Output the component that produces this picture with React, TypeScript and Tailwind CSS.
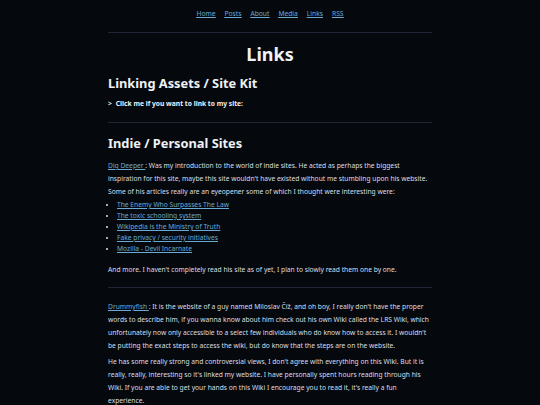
import React from "react";

const links = [
  "The Enemy Who Surpasses The Law",
  "The toxic schooling system",
  "Wikipedia is the Ministry of Truth",
  "Fake privacy / security initiatives",
  "Mozilla - Devil Incarnate",
];

export default function App() {
  return (
    <div
      className="min-h-[405px] bg-[#05090e] text-[#dadfe5] text-[6.7px] leading-[13px]"
      style={{ fontFamily: '"Noto Sans", sans-serif' }}
    >
      <div className="mx-auto w-[324px] pt-[7px]">
        <nav className="flex justify-center gap-[9px] text-[#6aaad4] underline">
          <a>Home</a>
          <a>Posts</a>
          <a>About</a>
          <a>Media</a>
          <a>Links</a>
          <a>RSS</a>
        </nav>
        <div className="mt-[12px] h-px bg-[#1e2633]" />
        <h1 className="mt-[8px] text-center text-[18px] leading-[26px] font-bold text-[#eef2f6]">Links</h1>
        <h2 className="mt-[7px] text-[12.8px] leading-[18px] font-bold text-[#eef2f6]">Linking Assets / Site Kit</h2>
        <div className="mt-[5px] flex gap-[4px] font-bold text-[6.7px] text-[#eef2f6]">
          <span>&gt;</span>
          <span>Click me if you want to link to my site:</span>
        </div>
        <div className="mt-[12px] h-px bg-[#1e2633]" />
        <h2 className="mt-[11px] text-[12.8px] leading-[18px] font-bold text-[#eef2f6]">Indie / Personal Sites</h2>
        <p className="mt-[7px]">
          <a className="text-[#6aaad4] underline">Dig Deeper </a>: Was my introduction to the world of indie sites. He acted as perhaps the biggest
          <br />
          inspiration for this site, maybe this site wouldn't have existed without me stumbling upon his website.
          <br />
          Some of his articles really are an eyeopener some of which I thought were interesting were:
        </p>
        <ul className="mt-[1px] pl-[9px] list-disc leading-[11px]">
          {links.map((l) => (
            <li key={l}>
              <a className="text-[#6aaad4] underline">{l}</a>
            </li>
          ))}
        </ul>
        <p className="mt-[9px]">
          And more. I haven't completely read his site as of yet, I plan to slowly read them one by one.
        </p>
        <div className="mt-[11px] h-px bg-[#1e2633]" />
        <p className="mt-[12px]">
          <a className="text-[#6aaad4] underline">Drummyfish </a>: It is the website of a guy named Miloslav Číž, and oh boy, I really don't have the proper
          <br />
          words to describe him, if you wanna know about him check out his own Wiki called the LRS Wiki, which
          <br />
          unfortunately now only accessible to a select few individuals who do know how to access it. I wouldn't
          <br />
          be putting the exact steps to access the wiki, but do know that the steps are on the website.
        </p>
        <p className="mt-[3px]">
          He has some really strong and controversial views, I don't agree with everything on this Wiki. But it is
          <br />
          really, really, interesting so it's linked my website. I have personally spent hours reading through his
          <br />
          Wiki. If you are able to get your hands on this Wiki I encourage you to read it, it's really a fun
          <br />
          experience.
        </p>
      </div>
    </div>
  );
}
